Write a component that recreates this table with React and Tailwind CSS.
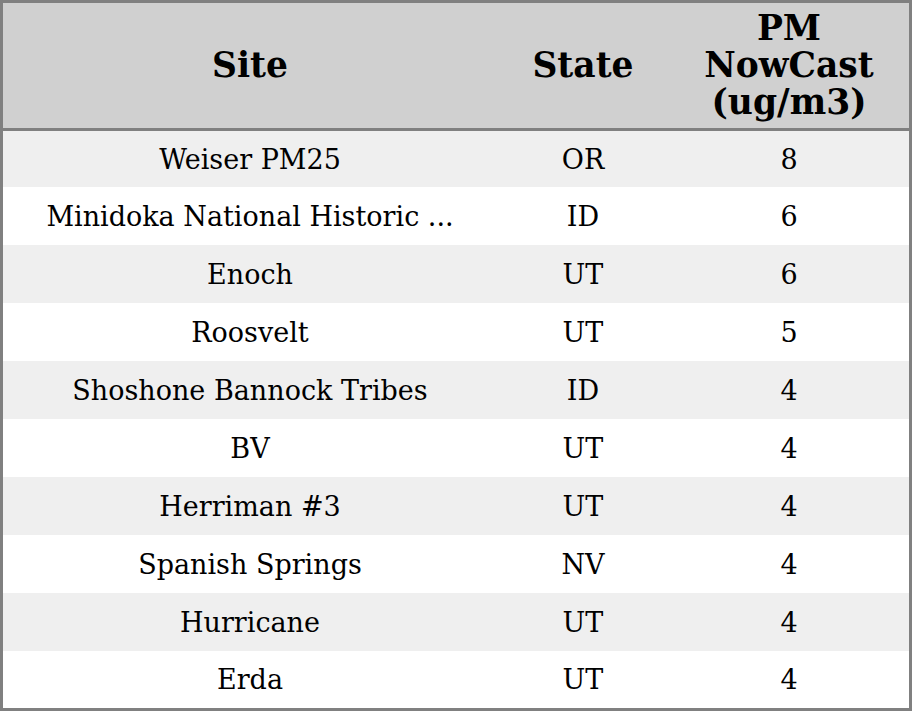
import React from "react";

const rows = [
  ["Weiser PM25", "OR", "8"],
  ["Minidoka National Historic ...", "ID", "6"],
  ["Enoch", "UT", "6"],
  ["Roosvelt", "UT", "5"],
  ["Shoshone Bannock Tribes", "ID", "4"],
  ["BV", "UT", "4"],
  ["Herriman #3", "UT", "4"],
  ["Spanish Springs", "NV", "4"],
  ["Hurricane", "UT", "4"],
  ["Erda", "UT", "4"],
];

export default function App() {
  return (
    <div
      className="w-[912px] h-[711px] border-[3px] border-[#808080] bg-white text-black flex flex-col overflow-hidden"
      style={{ fontFamily: '"DejaVu Serif", serif' }}
    >
      <div className="grid grid-cols-[494px_172px_240px] h-[125px] bg-[#d0d0d0] border-b-[3px] border-[#808080] font-bold text-[34.5px] leading-[37px] box-content">
        <div className="flex items-center justify-center text-center">Site</div>
        <div className="flex items-center justify-center text-center">State</div>
        <div className="flex items-center justify-center text-center">
          PM
          <br />
          NowCast
          <br />
          (ug/m3)
        </div>
      </div>
      {rows.map((r, i) => (
        <div
          key={i}
          className={
            "grid grid-cols-[494px_172px_240px] text-[27px] pt-[2px] " +
            (i % 2 === 0 ? "bg-[#efefef] " : "bg-white ") +
            (i === 0 ? "h-[56px]" : i === 9 ? "h-[57px]" : "h-[58px]")
          }
        >
          <div className="flex items-center justify-center whitespace-nowrap">{r[0]}</div>
          <div className="flex items-center justify-center">{r[1]}</div>
          <div className="flex items-center justify-center">{r[2]}</div>
        </div>
      ))}
    </div>
  );
}
